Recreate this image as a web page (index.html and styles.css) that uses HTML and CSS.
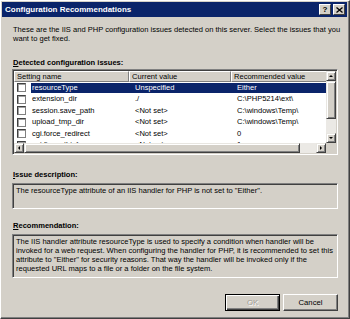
FILE: index.html
```html
<!DOCTYPE html>
<html lang="en">
<head>
    <meta charset="UTF-8">
    <title>Configuration Recommendations</title>
    <link rel="stylesheet" href="styles.css">
</head>
<body>
    <div class="window">
        <div class="titlebar">
            <span class="title">Configuration Recommendations</span>
            <div class="caption-buttons">
                <span class="cap-btn help">?</span>
                <span class="cap-btn close">
                    <svg width="7" height="6" viewBox="0 0 7 6"><path d="M0.5 0.5 L6.5 5.5 M6.5 0.5 L0.5 5.5" stroke="#000" stroke-width="1.3"/></svg>
                </span>
            </div>
        </div>

        <div class="content">
            <p class="intro">These are the IIS and PHP configuration issues detected on this server. Select the issues that you<br>want to get fixed.</p>

            <div class="label"><u>D</u>etected configuration issues:</div>
            <div class="listview">
                <div class="lv-main">
                    <div class="lv-header">
                        <div class="hcell c1">Setting name</div>
                        <div class="hcell c2">Current value</div>
                        <div class="hcell c3">Recommended value</div>
                    </div>
                    <div class="lv-row selected">
                        <span class="check"></span>
                        <span class="cell c1">resourceType</span>
                        <span class="cell c2">Unspecified</span>
                        <span class="cell c3">Either</span>
                    </div>
                    <div class="lv-row">
                        <span class="check"></span>
                        <span class="cell c1">extension_dir</span>
                        <span class="cell c2">./</span>
                        <span class="cell c3">C:\PHP5214\ext\</span>
                    </div>
                    <div class="lv-row">
                        <span class="check"></span>
                        <span class="cell c1">session.save_path</span>
                        <span class="cell c2">&lt;Not set&gt;</span>
                        <span class="cell c3">C:\windows\Temp\</span>
                    </div>
                    <div class="lv-row">
                        <span class="check"></span>
                        <span class="cell c1">upload_tmp_dir</span>
                        <span class="cell c2">&lt;Not set&gt;</span>
                        <span class="cell c3">C:\windows\Temp\</span>
                    </div>
                    <div class="lv-row">
                        <span class="check"></span>
                        <span class="cell c1">cgi.force_redirect</span>
                        <span class="cell c2">&lt;Not set&gt;</span>
                        <span class="cell c3">0</span>
                    </div>
                    <div class="lv-row">
                        <span class="check"></span>
                        <span class="cell c1">cgi.fix_pathinfo</span>
                        <span class="cell c2">&lt;Not set&gt;</span>
                        <span class="cell c3">1</span>
                    </div>
                </div>
                <div class="vscroll">
                    <span class="sb-btn"><i class="arrow up"></i></span>
                    <span class="sb-thumb v"></span>
                    <span class="sb-track"></span>
                    <span class="sb-btn"><i class="arrow down"></i></span>
                </div>
                <div class="hscroll">
                    <span class="sb-btn"><i class="arrow left"></i></span>
                    <span class="sb-thumb h"></span>
                    <span class="sb-track"></span>
                    <span class="sb-btn"><i class="arrow right"></i></span>
                </div>
                <div class="corner"></div>
            </div>

            <div class="label issue-label"><u>I</u>ssue description:</div>
            <div class="readonly issue">The resourceType attribute of an IIS handler for PHP is not set to "Either".</div>

            <div class="label rec-label"><u>R</u>ecommendation:</div>
            <div class="readonly recommend">The IIS handler attribute resourceType is used to specify a condition when handler will be<br>invoked for a web request. When configuring the handler for PHP, it is recommended to set this<br>attribute to "Either" for security reasons. That way the handler will be invoked only if the<br>requested URL maps to a file or a folder on the file system.</div>

            <div class="buttons">
                <button class="btn default" disabled>OK</button>
                <button class="btn">Cancel</button>
            </div>
        </div>
    </div>
</body>
</html>
```

FILE: styles.css
```css
/* Classic dialog look */
* {
    margin: 0;
    padding: 0;
    box-sizing: border-box;
}
body {
    background: #d4d0c8;
    font-family: 'Liberation Sans', Arial, sans-serif;
    font-size: 7.55px;
    color: #000;
}

/* Window frame */
.window {
    width: 350px;
    height: 319px;
    background: #d4d0c8;
    border-top: 1px solid #ffffff;
    border-left: 1px solid #ffffff;
    border-right: 1px solid #404040;
    border-bottom: 1px solid #404040;
    box-shadow: inset -1px -1px 0 #808080;
    padding: 1px 2px 0 1px;
    display: flex;
    flex-direction: column;
}

/* Title bar */
.titlebar {
    height: 15px;
    background: #0a246a;
    display: flex;
    align-items: center;
    justify-content: space-between;
    padding: 0 2px 0 3px;
}
.title {
    color: #fff;
    font-weight: bold;
    font-size: 8px;
}
.caption-buttons {
    display: flex;
    gap: 1px;
}
.cap-btn {
    width: 12px;
    height: 11px;
    background: #d4d0c8;
    border-top: 1px solid #fff;
    border-left: 1px solid #fff;
    border-right: 1px solid #404040;
    border-bottom: 1px solid #404040;
    display: flex;
    align-items: center;
    justify-content: center;
    font-weight: bold;
    font-size: 8px;
    line-height: 1;
}
.cap-btn.close {
    margin-left: 1px;
}

/* Content */
.content {
    padding: 8px 9px 0 10px;
    display: flex;
    flex-direction: column;
}
.intro {
    line-height: 9px;
    white-space: nowrap;
    margin-left: 1px;
}
.label {
    font-weight: bold;
    margin: 15px 0 2px 1px;
    line-height: 9px;
}
.label u {
    text-decoration: underline;
}
.issue-label {
    margin-bottom: 4px;
}
.rec-label {
    margin-top: 12px;
    margin-bottom: 4px;
}

/* List view */
.listview {
    height: 86px;
    background: #fff;
    border-top: 1px solid #808080;
    border-left: 1px solid #808080;
    border-right: 1px solid #fff;
    border-bottom: 1px solid #fff;
    box-shadow: inset 1px 1px 0 #404040, inset -1px -1px 0 #d4d0c8;
    padding: 1px;
    display: grid;
    grid-template-columns: 1fr 10px;
    grid-template-rows: 1fr 10px;
}
.lv-main {
    overflow: hidden;
    white-space: nowrap;
}
.lv-header {
    display: flex;
    height: 11px;
}
.hcell {
    background: #d4d0c8;
    border-top: 1px solid #fff;
    border-left: 1px solid #fff;
    border-right: 1px solid #808080;
    border-bottom: 1px solid #808080;
    padding-left: 2px;
    line-height: 9px;
    flex: none;
}
.hcell.c1 { width: 115px; }
.hcell.c2 { width: 102px; }
.hcell.c3 { width: 110px; }

.lv-row {
    display: flex;
    align-items: center;
    height: 11.5px;
    line-height: 10px;
}
.check {
    width: 9px;
    height: 9px;
    margin: 0 5px 0 3px;
    background: #fff;
    border: 1px solid #404040;
    border-right-color: #808080;
    border-bottom-color: #808080;
    box-shadow: inset 1px 1px 0 #a0a0a0;
    flex: none;
}
.cell {
    flex: none;
    height: 10px;
}
.cell.c1 { width: 101px; padding-left: 1px; }
.cell.c2 { width: 102px; padding-left: 3px; }
.cell.c3 { width: 110px; padding-left: 3px; }
.lv-row.selected .cell {
    background: #0a246a;
    color: #fff;
}

/* Scrollbars */
.vscroll {
    display: flex;
    flex-direction: column;
}
.hscroll {
    display: flex;
}
.sb-btn, .sb-thumb, .corner {
    background: #d4d0c8;
}
.sb-btn, .sb-thumb {
    border-top: 1px solid #e8e6e1;
    border-left: 1px solid #e8e6e1;
    border-right: 1px solid #404040;
    border-bottom: 1px solid #404040;
    box-shadow: inset 1px 1px 0 #fff, inset -1px -1px 0 #808080;
}
.sb-btn {
    width: 10px;
    height: 10px;
    flex: none;
    display: flex;
    align-items: center;
    justify-content: center;
}
.sb-track {
    flex: 1;
    background: #ebe9e5;
}
.sb-thumb.v {
    height: 38px;
    flex: none;
}
.sb-thumb.h {
    width: 276px;
    flex: none;
}
.arrow {
    width: 0;
    height: 0;
    border: 2px solid transparent;
}
.arrow.up { border-bottom: 2px solid #000; border-top: 0; margin-top: -1px; }
.arrow.down { border-top: 2px solid #000; border-bottom: 0; }
.arrow.left { border-right: 2px solid #000; border-left: 0; }
.arrow.right { border-left: 2px solid #000; border-right: 0; }

/* Read-only text boxes */
.readonly {
    background: #d4d0c8;
    border-top: 1px solid #808080;
    border-left: 1px solid #808080;
    border-right: 1px solid #fff;
    border-bottom: 1px solid #fff;
    box-shadow: inset 1px 1px 0 #404040, inset -1px -1px 0 #d4d0c8;
    padding: 2px 3px;
    line-height: 9px;
    white-space: nowrap;
}
.issue {
    height: 26px;
}
.recommend {
    height: 44px;
}

/* Dialog buttons */
.buttons {
    display: flex;
    justify-content: flex-end;
    gap: 3px;
    margin-top: 16px;
}
.btn {
    width: 55px;
    height: 17px;
    font-family: inherit;
    font-size: 7.7px;
    background: #d4d0c8;
    border-top: 1px solid #fff;
    border-left: 1px solid #fff;
    border-right: 1px solid #404040;
    border-bottom: 1px solid #404040;
    box-shadow: inset -1px -1px 0 #808080;
    color: #000;
}
.btn.default {
    border: 1px solid #000;
    box-shadow: inset 1px 1px 0 #fff, inset -1px -1px 0 #404040, inset -2px -2px 0 #808080;
}
.btn:disabled {
    color: #a09c94;
    text-shadow: 1px 1px 0 #fff;
}
```
